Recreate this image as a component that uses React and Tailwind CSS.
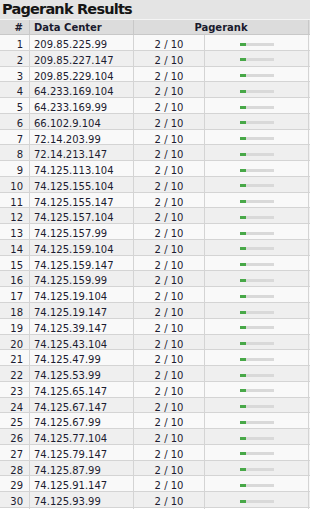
import React from 'react';

const ips = [
    '209.85.225.99', '209.85.227.147', '209.85.229.104', '64.233.169.104', '64.233.169.99',
    '66.102.9.104', '72.14.203.99', '72.14.213.147', '74.125.113.104', '74.125.155.104',
    '74.125.155.147', '74.125.157.104', '74.125.157.99', '74.125.159.104', '74.125.159.147',
    '74.125.159.99', '74.125.19.104', '74.125.19.147', '74.125.39.147', '74.125.43.104',
    '74.125.47.99', '74.125.53.99', '74.125.65.147', '74.125.67.147', '74.125.67.99',
    '74.125.77.104', '74.125.79.147', '74.125.87.99', '74.125.91.147', '74.125.93.99',
];

const cols = 'grid grid-cols-[30px_104px_71px_104px]';

function Row({ n, ip, rank }) {
    const even = n % 2 === 0;
    return (
        <div className={`${cols} h-[15.77px] border-b border-[#d4d4d4] ${even ? 'bg-[#efefef]' : 'bg-[#f9f9f9]'}`}>
            <div className="flex items-center justify-end pr-[6px] pt-[2px] border-r border-[#d4d4d4]">{n}</div>
            <div className="flex items-center pl-[4px] pt-[2px] border-r border-[#d4d4d4]">{ip}</div>
            <div className="flex items-center justify-center pt-[2px] border-r border-[#d4d4d4]">{rank} / 10</div>
            <div className="flex items-center justify-center pt-[1px] border-r border-[#d4d4d4]">
                <div className="flex w-[34px] h-[3px] bg-[#d9d9d9]">
                    <div className="h-full bg-[#48a848]" style={{ width: `${rank * 10}%` }} />
                </div>
            </div>
        </div>
    );
}

export default function App() {
    return (
        <div className="w-[310px] h-[512px] overflow-hidden bg-white font-['Tahoma','DejaVu_Sans',sans-serif] text-[10px] text-[#1c1c30]">
            <div className="h-[20px] bg-[#e4e4e4] border-b border-[#f4f4f4] pl-[2px] flex items-center">
                <h1 className="text-[14.5px] font-bold tracking-[-0.8px] text-[#151515] leading-none">Pagerank Results</h1>
            </div>
            <div className={`${cols} h-[15px] bg-[#dcdcdc] border-b border-[#c8c8c8] font-bold text-[#1a1a2e]`}>
                <div className="flex items-center justify-end pr-[6px] border-r border-[#c8c8c8]">#</div>
                <div className="flex items-center pl-[4px] border-r border-[#c8c8c8]">Data Center</div>
                <div className="col-span-2 flex items-center justify-center border-r border-[#c8c8c8]">Pagerank</div>
            </div>
            {ips.map((ip, i) => (
                <Row key={ip} n={i + 1} ip={ip} rank={2} />
            ))}
        </div>
    );
}
